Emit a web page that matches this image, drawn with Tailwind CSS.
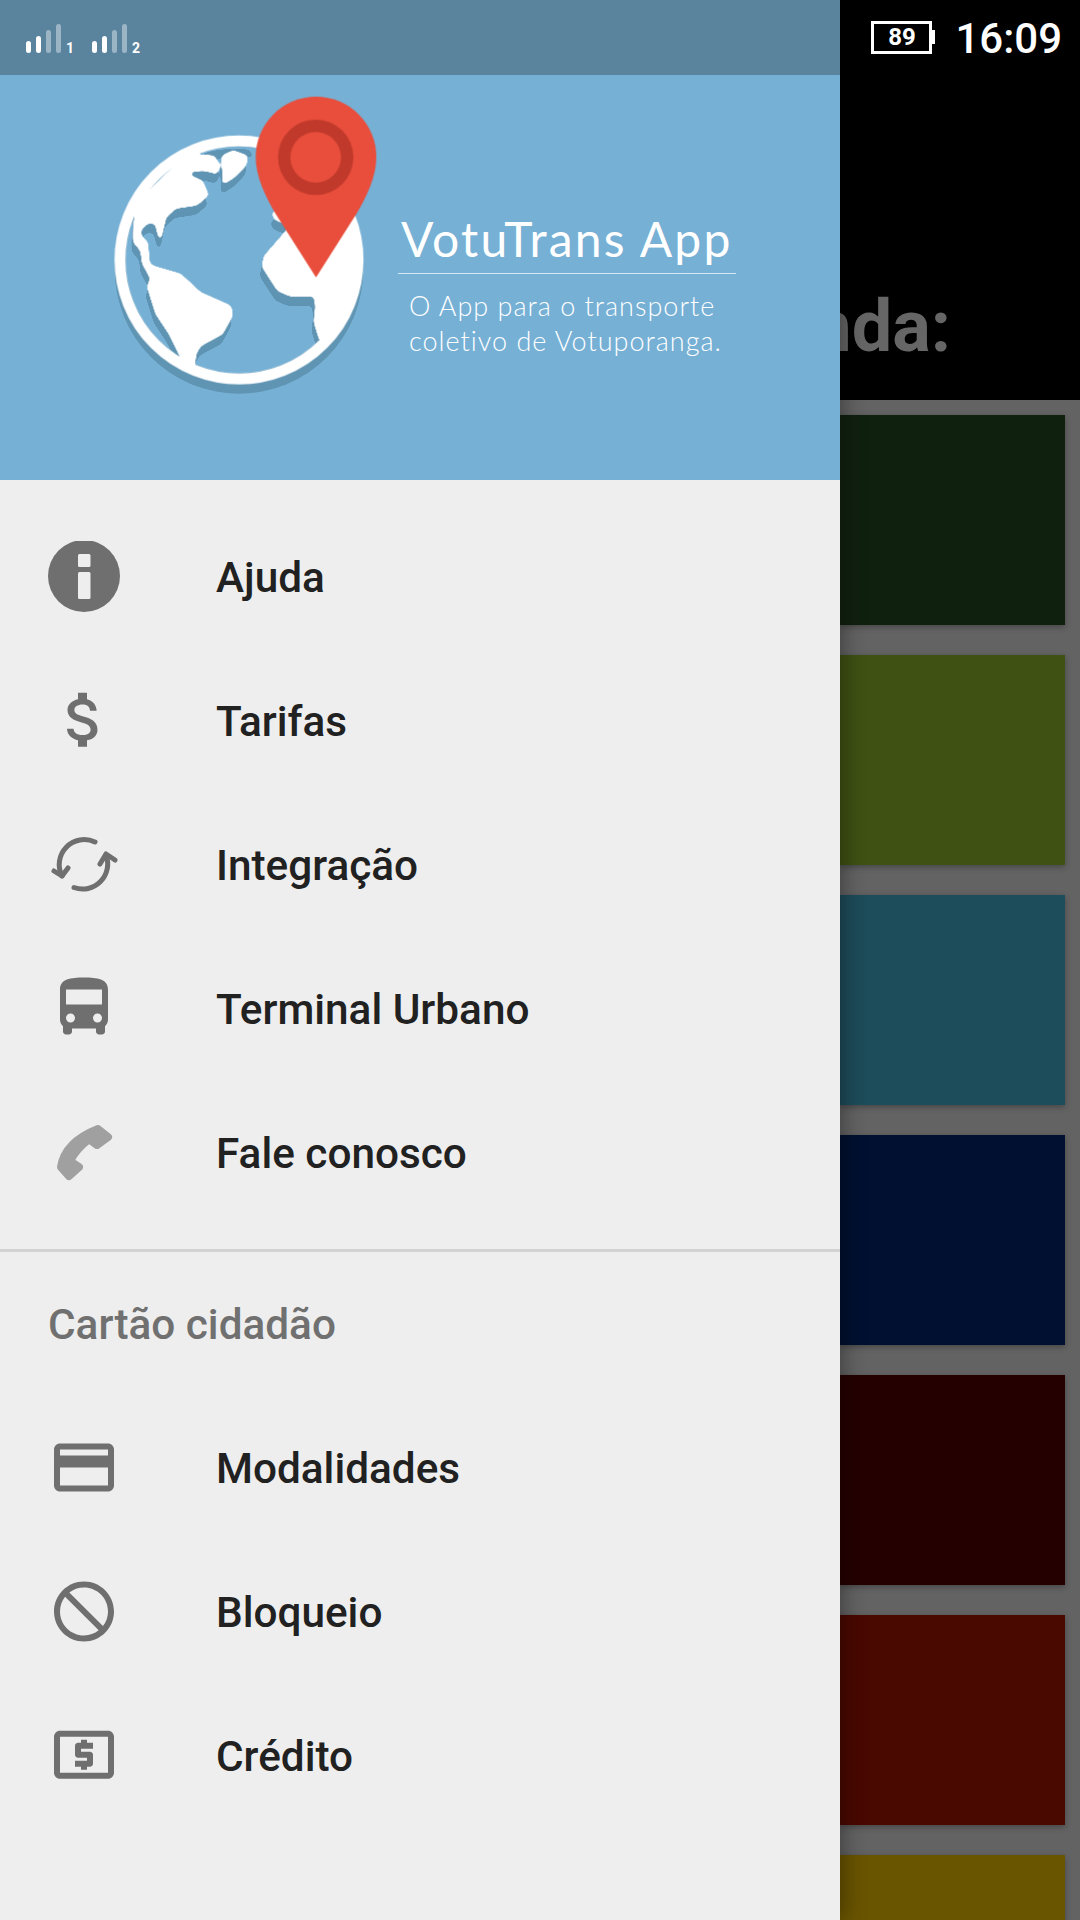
<!DOCTYPE html>
<html lang="pt">
<head>
<meta charset="utf-8">
<script src="https://cdn.jsdelivr.net/npm/@tailwindcss/browser@4"></script>
<title>VotuTrans App</title>
</head>
<body class="m-0 bg-black">
<div class="flex w-[1080px] h-[1920px] overflow-hidden bg-black font-['Roboto',sans-serif]">
  <aside class="relative z-10 flex flex-col w-[840px] h-full shrink-0 bg-[#eeeeee] shadow-[0_0_24px_rgba(0,0,0,0.45)]">
    <div class="flex items-end gap-[4px] h-[75px] pl-[26px] pb-[22px] bg-[#5a849e] shrink-0">
      <div class="flex items-end gap-[5px]">
        <span class="w-[5px] h-[12px] rounded-full bg-white"></span>
        <span class="w-[5px] h-[17px] rounded-full bg-white"></span>
        <span class="w-[5px] h-[23px] rounded-full bg-white/40"></span>
        <span class="w-[5px] h-[29px] rounded-full bg-white/40"></span>
        <span class="w-[9px] text-[14px] leading-[10px] font-bold text-white">1</span>
      </div>
      <div class="flex items-end gap-[5px] ml-[13px]">
        <span class="w-[5px] h-[12px] rounded-full bg-white"></span>
        <span class="w-[5px] h-[17px] rounded-full bg-white"></span>
        <span class="w-[5px] h-[23px] rounded-full bg-white/40"></span>
        <span class="w-[5px] h-[29px] rounded-full bg-white/40"></span>
        <span class="w-[9px] text-[14px] leading-[10px] font-bold text-white">2</span>
      </div>
    </div>
    <header class="relative h-[405px] shrink-0 bg-[#76b0d5] overflow-hidden">
      <svg class="absolute left-0 top-0 w-[840px] h-[405px]" viewBox="0 225 2520 1215" aria-hidden="true">
        <defs>
          <clipPath id="inner"><circle cx="717" cy="780" r="345"/></clipPath>
          <clipPath id="outer"><circle cx="717" cy="780" r="370"/></clipPath>
          <filter id="soft" x="-10%" y="-10%" width="120%" height="120%">
            <feGaussianBlur stdDeviation="7"/>
            <feColorMatrix values="1 0 0 0 0 0 1 0 0 0 0 0 1 0 0 0 0 0 16 -7"/>
          </filter>
        </defs>
        <circle cx="717" cy="808" r="373" fill="#5f94b3"/>
        <circle cx="717" cy="780" r="340" fill="#76b0d5"/>
        <g clip-path="url(#inner)">
          <g filter="url(#soft)" fill="#5f94b3" stroke="#5f94b3" stroke-width="8" stroke-linejoin="round">
            <path transform="translate(-4 28)" d="M590 440L590 468 640 470 655 495 650 518 612 508 570 512 565 528 605 545 622 585 590 612 525 622 495 650 480 715 468 668 445 665 420 685 420 710 440 728 445 790 455 800 540 825 600 880 690 920 695 945 665 1000 600 1035 585 1060 580 1100 545 1072 510 1000 470 940 445 860 455 835 430 790 425 750 403 725 403 690 410 625 380 640Z"/>
            <path transform="translate(-4 28)" d="M668 470L700 455 740 470 735 495 700 530 670 548 672 505Z"/>
            <path transform="translate(-6 28)" d="M860 695L795 770 790 800 835 870 870 885 945 885 950 920 945 965 962 1020 1030 1020 1090 780 1060 640 900 640Z"/>
            <path d="M590 468Q660 440 750 450L760 475 740 470 700 455 668 470 655 480 640 470Z" stroke="none"/>
            <path transform="translate(-4 28)" d="M835 628L820 640 825 655 855 668 870 640Z"/>
          </g>
        </g>
        <g clip-path="url(#outer)">
          <g filter="url(#soft)" fill="#ffffff" stroke="#ffffff" stroke-width="8" stroke-linejoin="round">
            <path d="M590 440L590 468 640 470 655 495 650 518 612 508 570 512 565 528 605 545 622 585 590 612 525 622 495 650 480 715 468 668 445 665 420 685 420 710 440 728 445 790 455 800 540 825 600 880 690 920 695 945 665 1000 600 1035 585 1060 580 1100 545 1072 510 1000 470 940 445 860 455 835 430 790 425 750 403 725 403 690 410 625 380 640Z"/>
            <path d="M668 470L700 455 740 470 735 495 700 530 670 548 672 505Z"/>
            <path d="M860 695L795 770 790 800 835 870 870 885 945 885 950 920 945 965 962 1020 1030 1020 1090 780 1060 640 900 640Z"/>
            <path d="M835 628L820 640 825 655 855 668 870 640Z"/>
          </g>
        </g>
        <circle cx="717" cy="780" r="357" fill="none" stroke="#ffffff" stroke-width="33"/>
        <path d="M948 290A181 181 0 0 1 1129 471C1129 530 1100 590 1070 640L948 832 826 640C796 590 767 530 767 471A181 181 0 0 1 948 290Z" fill="#e84e3b"/>
        <circle cx="947" cy="472" r="113" fill="#c0392b"/>
        <circle cx="947" cy="472" r="76" fill="#e84e3b"/>
      </svg>
      <div class="absolute left-[398px] top-[135px] w-[338px] font-['Lato',sans-serif] text-white">
        <div class="h-[64px] border-b border-white/70 pl-[3px] text-[48px] leading-[58px] tracking-[2.2px] whitespace-nowrap">VotuTrans App</div>
        <div class="mt-[14px] pl-[11px] text-[27px] font-light leading-[35px] tracking-[1px] whitespace-nowrap">O App para o transporte<br>coletivo de Votuporanga.</div>
      </div>
    </header>
    <nav class="flex-1 flex flex-col pt-[25px] text-[#212121]">
      <a class="flex items-center h-[144px]">
        <svg class="w-[72px] h-[72px] ml-[48px] mr-[96px]" viewBox="48 541 72 72" aria-hidden="true">
          <circle cx="84" cy="576" r="36" fill="#6f6f6f"/>
          <rect x="78" y="554" width="12.5" height="13" rx="1.5" fill="#eeeeee"/>
          <rect x="78" y="572" width="12.5" height="27" rx="1.5" fill="#eeeeee"/>
        </svg>
        <span class="pt-[2px] text-[42.3px] font-medium">Ajuda</span>
      </a>
      <a class="flex items-center h-[144px]">
        <svg class="w-[72px] h-[72px] ml-[48px] mr-[96px]" viewBox="0 0.4 24 24" aria-hidden="true"><path fill="#6f6f6f" d="M11.8 10.9c-2.27-.59-3-1.2-3-2.15 0-1.09 1.01-1.85 2.7-1.85 1.78 0 2.44.85 2.5 2.1h2.21c-.07-1.72-1.12-3.3-3.21-3.81V3h-3v2.16c-1.94.42-3.5 1.68-3.5 3.61 0 2.31 1.91 3.46 4.7 4.13 2.5.6 3 1.48 3 2.41 0 .69-.49 1.79-2.7 1.79-2.06 0-2.87-.92-2.98-2.1h-2.2c.12 2.19 1.76 3.42 3.68 3.83V21h3v-2.15c1.95-.37 3.5-1.5 3.5-3.55 0-2.84-2.43-3.81-4.7-4.4z"/></svg>
        <span class="pt-[2px] text-[42.3px] font-medium">Tarifas</span>
      </a>
      <a class="flex items-center h-[144px]">
        <svg class="w-[72px] h-[72px] ml-[48px] mr-[96px]" viewBox="48 828 72 72" fill="none" stroke="#6f6f6f" stroke-width="5" stroke-linecap="round" stroke-linejoin="round" aria-hidden="true">
          <path d="M95 841A25 25 0 0 0 62 875"/>
          <path d="M54 870L62 875 68 867"/>
          <path d="M74 886.5A25 25 0 0 0 106 854"/>
          <path d="M100 863L106 853 115 859"/>
        </svg>
        <span class="pt-[2px] text-[42.3px] font-medium">Integração</span>
      </a>
      <a class="flex items-center h-[144px]">
        <svg class="w-[72px] h-[72px] ml-[48px] mr-[96px]" viewBox="0 0.5 24 24" aria-hidden="true"><path fill="#6f6f6f" d="M4 16c0 .88.39 1.67 1 2.22V20c0 .55.45 1 1 1h1c.55 0 1-.45 1-1v-1h8v1c0 .55.45 1 1 1h1c.55 0 1-.45 1-1v-1.78c.61-.55 1-1.34 1-2.22V6c0-3.5-3.58-4-8-4s-8 .5-8 4v10zm3.5 1c-.83 0-1.5-.67-1.5-1.5S6.67 14 7.5 14s1.5.67 1.5 1.5S8.33 17 7.5 17zm9 0c-.83 0-1.5-.67-1.5-1.5s.67-1.5 1.5-1.5 1.5.67 1.5 1.5-.67 1.5-1.5 1.5zm1.5-6H6V6h12v5z"/></svg>
        <span class="pt-[2px] text-[42.3px] font-medium">Terminal Urbano</span>
      </a>
      <a class="flex items-center h-[144px]">
        <svg class="w-[72px] h-[72px] ml-[48px] mr-[96px]" viewBox="48 1117 72 72" aria-hidden="true"><path fill="#a0a0a0" stroke="#a0a0a0" stroke-width="8" stroke-linejoin="round" d="M98 1129L108 1137 97 1145 89 1139Q76 1149 70 1161L79 1167 69 1176 61 1167Q65 1142 98 1129Z"/></svg>
        <span class="pt-[2px] text-[42.3px] font-medium">Fale conosco</span>
      </a>
      <div class="h-[3px] mt-[24px] bg-[#d2d2d2]"></div>
      <div class="h-[144px] pl-[48px] pt-[48px] text-[42.3px] leading-[49px] font-medium text-[#707070]">Cartão cidadão</div>
      <a class="flex items-center h-[144px]">
        <svg class="w-[72px] h-[72px] ml-[48px] mr-[96px]" viewBox="0 0.2 24 24" aria-hidden="true"><path fill="#6f6f6f" d="M20 4H4c-1.11 0-1.99.89-1.99 2L2 18c0 1.11.89 2 2 2h16c1.11 0 2-.89 2-2V6c0-1.11-.89-2-2-2zm0 14H4v-6h16v6zm0-10H4V6h16v2z"/></svg>
        <span class="pt-[2px] text-[42.3px] font-medium">Modalidades</span>
      </a>
      <a class="flex items-center h-[144px]">
        <svg class="w-[72px] h-[72px] ml-[48px] mr-[96px]" viewBox="0 0.2 24 24" aria-hidden="true"><path fill="#6f6f6f" transform="translate(24 0) scale(-1 1)" d="M12 2C6.48 2 2 6.48 2 12s4.48 10 10 10 10-4.48 10-10S17.52 2 12 2zM4 12c0-4.42 3.58-8 8-8 1.85 0 3.55.63 4.9 1.69L5.69 16.9C4.63 15.55 4 13.85 4 12zm8 8c-1.85 0-3.55-.63-4.9-1.69L18.31 7.1C19.37 8.45 20 10.15 20 12c0 4.42-3.58 8-8 8z"/></svg>
        <span class="pt-[2px] text-[42.3px] font-medium">Bloqueio</span>
      </a>
      <a class="flex items-center h-[144px]">
        <svg class="w-[72px] h-[72px] ml-[48px] mr-[96px]" viewBox="0 0.4 24 24" aria-hidden="true"><path fill="#6f6f6f" d="M11 17h2v-1h1c.55 0 1-.45 1-1v-3c0-.55-.45-1-1-1h-3v-1h4V8h-2V7h-2v1h-1c-.55 0-1 .45-1 1v3c0 .55.45 1 1 1h3v1H9v2h2v1zm9-13H4c-1.11 0-1.99.89-1.99 2L2 18c0 1.11.89 2 2 2h16c1.11 0 2-.89 2-2V6c0-1.11-.89-2-2-2zm0 14H4V6h16v12z"/></svg>
        <span class="pt-[2px] text-[42.3px] font-medium">Crédito</span>
      </a>
    </nav>
  </aside>
  <main class="flex flex-col w-[240px] shrink-0 h-full">
    <div class="h-[400px] shrink-0 bg-black overflow-hidden">
      <div class="flex items-center justify-end h-[75px] pr-[18px] text-white">
        <div class="flex items-center justify-center w-[61px] h-[33px] mb-[1px] border-[3px] border-white text-[24px] leading-none font-bold">89</div>
        <div class="w-[3px] h-[14px] mb-[1px] bg-white"></div>
        <div class="ml-[20px] mt-[2px] text-[42px] leading-none font-medium">16:09</div>
      </div>
      <div class="flex justify-end pr-[129px] pt-[210px] text-[72px] leading-[84px] font-bold text-[#666666] whitespace-nowrap">nda:</div>
    </div>
    <div class="flex-1 flex flex-col gap-[30px] pt-[15px] pr-[15px] bg-[#636363] overflow-hidden">
      <div class="h-[210px] shrink-0 bg-[#10200f] shadow-[0_2px_6px_rgba(0,0,0,0.3)]"></div>
      <div class="h-[210px] shrink-0 bg-[#3f5113] shadow-[0_2px_6px_rgba(0,0,0,0.3)]"></div>
      <div class="h-[210px] shrink-0 bg-[#1d4c5a] shadow-[0_2px_6px_rgba(0,0,0,0.3)]"></div>
      <div class="h-[210px] shrink-0 bg-[#011030] shadow-[0_2px_6px_rgba(0,0,0,0.3)]"></div>
      <div class="h-[210px] shrink-0 bg-[#250000] shadow-[0_2px_6px_rgba(0,0,0,0.3)]"></div>
      <div class="h-[210px] shrink-0 bg-[#490800] shadow-[0_2px_6px_rgba(0,0,0,0.3)]"></div>
      <div class="h-[210px] shrink-0 bg-[#695400] shadow-[0_2px_6px_rgba(0,0,0,0.3)]"></div>
    </div>
  </main>
</div>
</body>
</html>
